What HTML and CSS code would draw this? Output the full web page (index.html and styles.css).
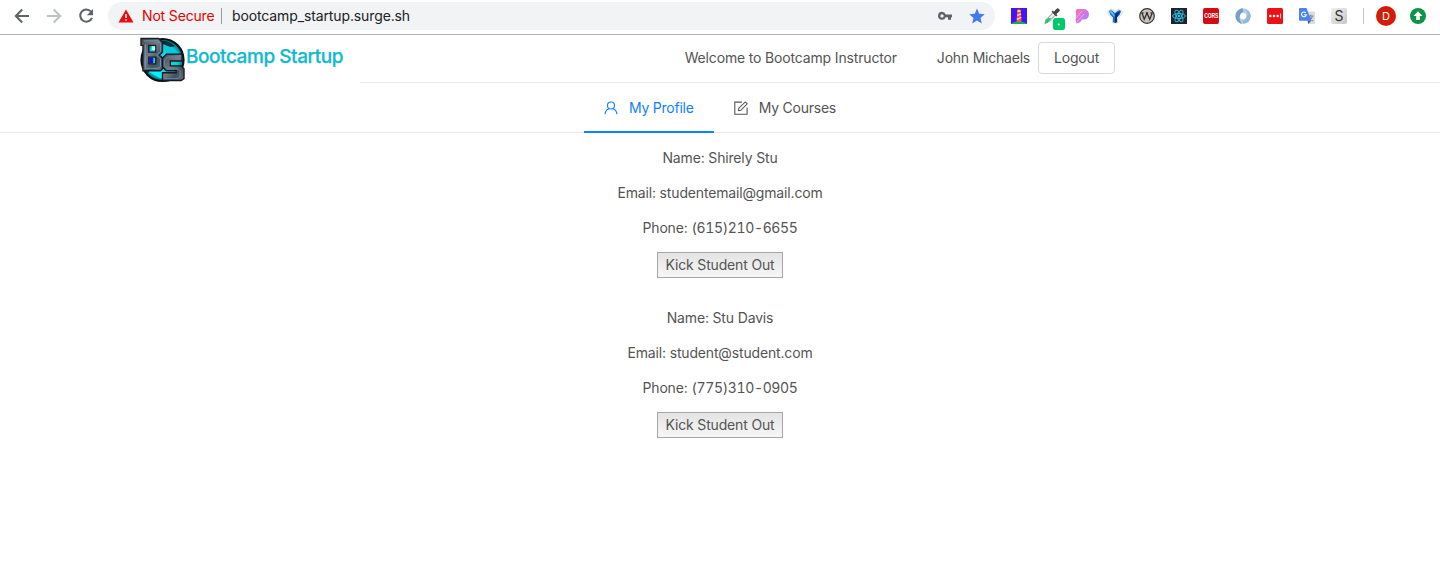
FILE: index.html
```html
<!DOCTYPE html>
<html lang="en">
<head>
<meta charset="utf-8">
<title>Bootcamp Startup</title>
<link rel="stylesheet" href="styles.css">
</head>
<body>
<div class="toolbar">
  <div class="nav-buttons">
    <svg class="i16" viewBox="0 0 16 16" fill="none" stroke="#5f6368" stroke-width="2"><path d="M15 8H2M8.2 1.5 1.8 8l6.4 6.5"/></svg>
    <svg class="i16" viewBox="0 0 16 16" fill="none" stroke="#bdc1c6" stroke-width="2"><path d="M1 8h13M7.8 1.5 14.2 8l-6.4 6.5"/></svg>
    <svg class="i16" viewBox="0 0 16 16"><path d="M13 3.6A6.1 6.1 0 1 0 14 9.800" fill="none" stroke="#5f6368" stroke-width="2"/><path d="M15 1v6.200H8.800z" fill="#5f6368"/></svg>
  </div>
  <div class="omnibox">
    <svg class="warning" viewBox="0 0 16 14"><path d="M8 .5 15.500 13.500H.5z" fill="#ee0a0a"/><path d="M7.200 5h1.600v4H7.200zM7.200 10.200h1.600v1.600H7.200z" fill="#fff"/></svg>
    <span class="not-secure">Not Secure</span>
    <span class="url">bootcamp_startup.surge.sh</span>
    <svg class="key" viewBox="0 0 16 16"><path fill="#5f6368" fill-rule="evenodd" d="M5 3.800a4 4 0 1 0 3.700 5.500H11v2.500h3V9.300h1V6.500H8.700A4 4 0 0 0 5 3.800zM5 6.200a1.700 1.700 0 1 1 0 3.400 1.700 1.700 0 0 1 0-3.400z"/></svg>
    <svg class="i16" viewBox="0 0 16 16"><path fill="#4279f4" d="m8 .5 2.200 5.200 5.500.5-4.200 3.700 1.300 5.500L8 12.500l-4.800 2.900 1.300-5.500L.3 6.200l5.500-.5z"/></svg>
  </div>
  <div class="extensions">
    <svg class="i16" viewBox="0 0 16 16"><path fill="#4415fb" d="M0 0h16v16H0z"/><path fill="#00b85a" d="M0 16q2-2.500 8-2.500t8 2.500z"/><path fill="#f55a43" d="M6.200 3h3.600l.7 11h-5z"/><path fill="#ffd43b" d="M6.300 2h3.400v2H6.300z"/><path fill="#e5382e" d="M6.500.8h3V2h-3z"/><path stroke="#ffe0c2" stroke-width="1.300" d="m6.200 7.500 3.800-1.700M5.900 11.300l4.400-2"/></svg>
    <svg class="eyedropper" viewBox="0 0 22 22"><path d="m10 4.500 2.500 2.500-7 7-3.500 1.500.8-3.500z" fill="#e6eae9" stroke="#777" stroke-width=".8"/><path d="m5.500 10 3 .5-4 4-2.300.7.6-2.700z" fill="#12cf6b"/><path d="m9.200 3.200 4.600 4.600" stroke="#444" stroke-width="1.800"/><path d="m11 4.500 2.200-3q1.400-1.300 2.600-.3 1.100 1.200-.2 2.600L12.700 6z" fill="#444" stroke="#444"/><rect x="10" y="10" width="12" height="12" rx="2.500" fill="#00c969"/><circle cx="15.700" cy="16.500" r="1" fill="#fff"/></svg>
    <svg class="i16" viewBox="0 0 16 16"><defs><linearGradient id="petal" x2="1" y2="1"><stop stop-color="#ff70a6"/><stop offset=".55" stop-color="#ce78ed"/><stop offset="1" stop-color="#8f83ff"/></linearGradient></defs><path fill="url(#petal)" d="M1 2.500Q1 1 3 1h6q4.800.5 5 5.500-.3 5-5.500 5H7Q5.500 15 1.500 15.500 0 12 1 8z"/><path stroke="#ffb6df" stroke-width=".7" d="m1 10 6-7M2 14l7-8"/></svg>
    <svg class="i16" viewBox="0 0 16 16"><path fill="#f4f4f4" stroke="#ccc" stroke-width=".7" d="m1 3 3-2 4 2 4-2 3 2v3l-4.500 5v4h-5v-4L1 6z"/><path fill="#126fc6" d="M2 3.500Q3 1.500 5 2.500L8 5l3-2.500q2-1 3 1-.5 3-4 6V14l-2 1-2-1V9.500Q2.500 6.500 2 3.500z"/><path fill="#062b75" d="m8 6 5.500-3-3.500 6v5L8 15z"/><path fill="#62c7ff" d="M2.500 3.500q1-.8 2.500 0L7.500 7v2z"/></svg>
    <svg class="i16" viewBox="0 0 16 16"><circle cx="8" cy="8" r="7.300" fill="#c9c1bc" stroke="#39332f" stroke-width="1.200"/><path d="m3 5 2.200 6.300L8 5.200l2.700 6.100L13.200 5M2.300 5h2.200M6.800 5h2.400M11.500 5h2.300" fill="none" stroke="#39332f" stroke-width="1.300"/></svg>
    <svg class="i16" viewBox="0 0 16 16"><path fill="#20232a" d="M0 0h16v16H0z"/><g fill="none" stroke="#25b9dc"><ellipse cx="8" cy="8" rx="6.500" ry="2.500"/><ellipse cx="8" cy="8" rx="6.500" ry="2.500" transform="rotate(60 8 8)"/><ellipse cx="8" cy="8" rx="6.500" ry="2.500" transform="rotate(120 8 8)"/></g><circle cx="8" cy="8" r="1.400" fill="#25b9dc"/></svg>
    <span class="cors"><span>CORS</span></span>
    <svg class="i16" viewBox="0 0 16 16"><circle cx="8" cy="8" r="5.500" fill="none" stroke="#b4cde6" stroke-width="4.600"/><path d="M7.500.3C-1.500 2-1.500 14 7 15.700 3.500 12 3.500 6 8.500 3.500z" fill="#789fc7"/><path d="M8.500 15.700q6.500-.7 7.200-7.200-.2-5-4.700-7.300 3 4.300.8 8.300-1.500 2.800-4.500 3.700z" fill="#97b8da"/></svg>
    <svg class="i16" viewBox="0 0 16 16"><rect width="16" height="16" rx="1.500" fill="#ed1015"/><g fill="#fff"><circle cx="3.300" cy="8" r="1.300"/><circle cx="7" cy="8" r="1.300"/><circle cx="10.700" cy="8" r="1.300"/><path d="M13.300 5.500h.8v5h-.8z"/></g></svg>
    <svg class="i16" viewBox="0 0 16 16"><path fill="#dadde0" d="M6 3.500h9q1 0 1 1V15q0 1-1 1H9z"/><path d="M9 8h5.500M11.700 6.700V8M13.500 8q-1 3.500-3.500 5M10.500 8.500q1 3 3.500 4.500" stroke="#6f91aa" stroke-width="1.100" fill="none"/><path fill="#4c83eb" d="M1 0h6.500l4.700 12.800H1q-1 0-1-1V1q0-1 1-1"/><path fill="#3058b0" d="M8.800 12.800h3.400L9.300 16z"/><path d="M6.800 4.800a2.400 2.400 0 1 0 .5 2H5" fill="none" stroke="#fff" stroke-width="1.100"/></svg>
    <span class="s-badge">S</span>
  </div>
  <div class="account"><span class="avatar">D</span>
    <svg class="i16" viewBox="0 0 16 16"><circle cx="8" cy="8" r="8" fill="#0c9547"/><path fill="#fff" d="M8 3.300 12.500 8H9.800v4H6.200V8H3.500z"/></svg>
  </div>
</div>

<header class="header">
  <div class="brand">
    <svg class="logo" viewBox="0 0 46 46">
      <defs>
        <radialGradient id="orb"><stop stop-color="#10edf5"/><stop offset=".75" stop-color="#08cbdc"/><stop offset="1" stop-color="#07636f"/></radialGradient>
        <linearGradient id="metal" x2="1" y2="1"><stop stop-color="#44494d"/><stop offset=".45" stop-color="#777c82"/><stop offset=".7" stop-color="#46515d"/><stop offset="1" stop-color="#6a6f72"/></linearGradient>
      </defs>
      <circle cx="23" cy="23" r="21.500" fill="url(#orb)" stroke="#051115" stroke-width="2.200"/>
      <path d="M22 3q8 0 14 6l-7 1-7-4zM4 32l6 1-2 4z" fill="#042f36"/>
      <path d="m24 7 10 4 6 6H27z" fill="#09cbdc"/>
      <path d="m9 35 10-5 8 8-6 4z" fill="#08f1ff"/>
      <path fill="url(#metal)" fill-rule="evenodd" stroke="#1a1d22" stroke-width="1.400" d="M1 1h18l4 4v10l-3 3 3 3v11l-2 2H3V8H1zm8 7v7h7V8zm0 12v7h7v-7z"/>
      <path fill="#1412b8" d="M9.500 20.500h4v6h-4z"/><path fill="#c8ffff" d="M12 9h3.500v4H12z"/>
      <path d="M4 3.500h14l3 3v8l-4 3.500 4 4v7.500l-2 2H5.500V7" fill="none" stroke="#6a9bcf" stroke-width=".9"/>
      <path fill="url(#metal)" stroke="#17191e" stroke-width="1.400" d="M27 17h16v7H31v5h11l3 3v10l-3 2H23v-8h14v-2H27l-4-4V21z"/>
      <path d="M41 20H28l-3 3v6l3 3h11l2 2v6l-2 2H25" fill="none" stroke="#5c88b4"/>
    </svg>
    <span class="brand-name">Bootcamp Startup</span>
  </div>
  <div class="user-area">
    <span class="welcome">Welcome to Bootcamp Instructor</span>
    <span class="username">John Michaels</span>
    <button class="logout">Logout</button>
  </div>
</header>

<nav class="tabs">
  <a class="tab active"><svg class="tab-icon" viewBox="0 0 14 14" fill="none" stroke="currentColor" stroke-width="1.150"><circle cx="7" cy="4.500" r="3.500"/><path d="M1.100 13.300C1.300 10.500 2.800 8.500 5 7.800M12.900 13.300C12.700 10.500 11.200 8.500 9 7.800"/></svg><span>My Profile</span></a>
  <a class="tab"><svg class="tab-icon" viewBox="0 0 14 14" fill="none" stroke="currentColor" stroke-width="1.100"><path d="M8 1.100H.8v12.100h12.300V6.500"/><path d="m4.500 9.700.3-2.500L11.300.9l1.900 1.900L6.800 9.300z"/></svg><span>My Courses</span></a>
</nav>

<main class="students">
  <section class="student">
    <p>Name: Shirely Stu</p>
    <p>Email: studentemail@gmail.com</p>
    <p>Phone: <span class="number">(615)210-6655</span></p>
    <button class="kick">Kick Student Out</button>
  </section>
  <section class="student">
    <p>Name: Stu Davis</p>
    <p>Email: student@student.com</p>
    <p>Phone: <span class="number">(775)310-0905</span></p>
    <button class="kick">Kick Student Out</button>
  </section>
</main>
</body>
</html>
```

FILE: styles.css
```css
* { box-sizing: border-box; }
body {
  margin: 0;
  background: #fff;
  color: #545454;
  font: 14px/21px Inter, "Liberation Sans", sans-serif;
  letter-spacing: -.16px;
}
svg { display: block; flex: none; }
button { font: inherit; letter-spacing: inherit; color: inherit; }
.i16 { width: 16px; height: 16px; }

.toolbar {
  display: flex;
  height: 35px;
  padding: 2px 14px 4px;
  border-bottom: 1px solid #b3b3b3;
}
.nav-buttons { display: flex; align-items: center; gap: 16px; width: 94px; }
.omnibox {
  display: flex;
  align-items: center;
  width: 887px;
  height: 28px;
  padding: 0 10px;
  border-radius: 14px;
  background: #f1f3f4;
}
.warning { width: 16px; height: 14px; }
.not-secure {
  width: 80px;
  margin-left: 8px;
  border-right: 1px solid #9a9da1;
  color: #e60000;
  line-height: 16px;
  white-space: nowrap;
}
.url { margin: -1px 0 0 10px; color: #202124; letter-spacing: -.12px; }
.key { width: 16px; height: 16px; margin: 0 16px 0 auto; }
.extensions { display: flex; gap: 16px; margin: 6px 0 0 16px; }
.eyedropper { width: 22px; height: 22px; margin-right: -6px; }
.cors, .s-badge { width: 16px; height: 16px; border-radius: 2px; text-align: center; }
.cors {
  display: flex;
  justify-content: center;
  background: #d50b12;
  color: #fff;
  font: bold 8px/16px "Liberation Sans", sans-serif;
  letter-spacing: -.2px;
}
.cors span { transform: scaleX(.62); }
.s-badge { background: linear-gradient(135deg, #eee, #c8c8c8); color: #333; line-height: 16px; }
.account {
  display: flex;
  align-items: center;
  gap: 14px;
  height: 16px;
  margin: 6px 0 0 16px;
  padding-left: 12px;
  border-left: 1px solid #c5c8ca;
}
.avatar {
  width: 20px;
  height: 20px;
  border-radius: 50%;
  background: #d41d08;
  color: #fff;
  font-size: 11px;
  line-height: 20px;
  text-align: center;
}

.header { display: flex; height: 48px; }
.brand { display: flex; width: 360px; padding: 2px 0 0 140px; }
.logo { width: 45px; height: 46px; }
.brand-name {
  margin: 5px 0 0 1px;
  color: #13b9d0;
  font-size: 19px;
  font-weight: 500;
  line-height: 30px;
  letter-spacing: -.45px;
  white-space: nowrap;
  -webkit-text-stroke: .25px #13b9d0;
}
.user-area {
  display: flex;
  flex: 1;
  align-items: center;
  justify-content: flex-end;
  padding: 0 325px 1px 0;
  border-bottom: 1px solid #e8e8e8;
}
.welcome, .username { padding-bottom: 2px; }
.welcome { margin-right: 40px; }
.username { margin-right: 8px; letter-spacing: -.22px; }
.logout {
  width: 77px;
  height: 32px;
  padding: 0 0 1px;
  border: 1px solid #d9d9d9;
  border-radius: 4px;
  background: #fff;
}

.tabs { display: flex; justify-content: center; height: 50px; border-bottom: 1px solid #e8e8e8; }
.tab { display: flex; align-items: center; height: 50px; padding: 0 20px; border-bottom: 2px solid transparent; letter-spacing: -.23px; }
.tab span { padding-left: 1px; }
.tab.active { border-color: #0a85ff; color: #1080ff; }
.tab-icon { width: 14px; height: 14px; margin: 2px 10px 0 0; }

.students { padding-top: 14px; text-align: center; }
.student { height: 160px; }
.student p { height: 21px; margin: 0 0 14px; }
.number { font-variant-numeric: tabular-nums; letter-spacing: -.36px; }
.kick {
  display: block;
  width: 126px;
  height: 26px;
  margin: 0 auto;
  padding: 0 0 1px;
  border: 1px solid #a6a6a6;
  background: linear-gradient(#e3e3e3, #f7f7f7);
}
```
